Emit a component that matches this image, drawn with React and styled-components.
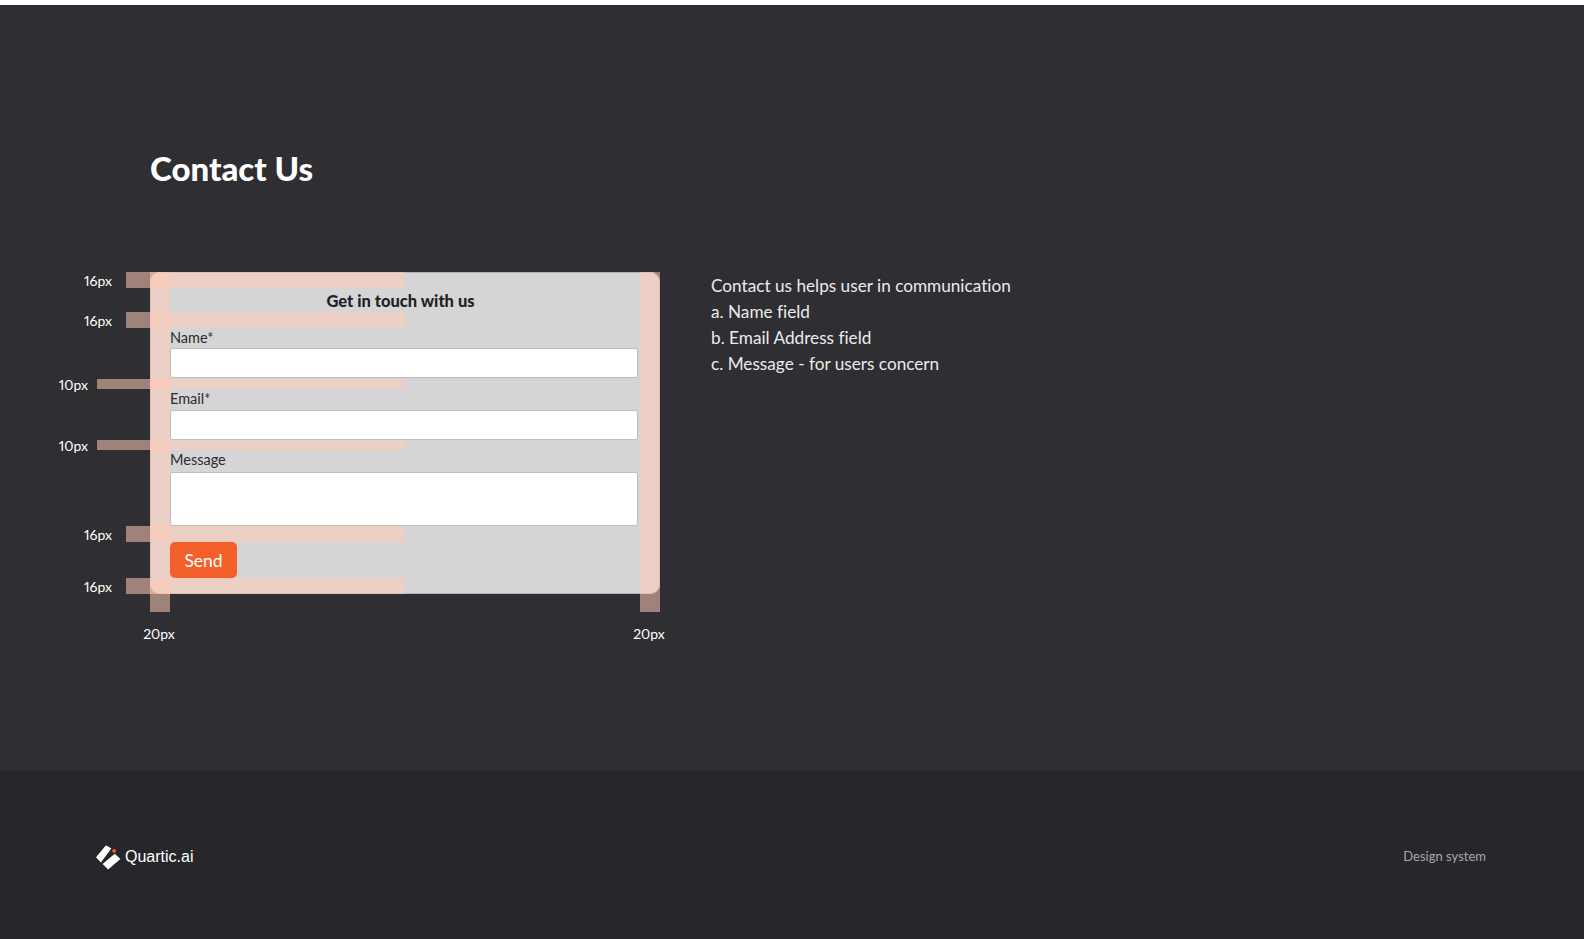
import React from 'react';
import styled, { createGlobalStyle } from 'styled-components';

const GlobalStyle = createGlobalStyle`
  body {
    margin: 0;
    background-color: #ffffff;
    font-family: 'Lato', 'Open Sans', sans-serif;
    font-variant-ligatures: none;
    font-variant-numeric: proportional-nums;
  }
`;

const Page = styled.div`
  padding-top: 5px;
  height: 934px;
  display: flex;
  flex-direction: column;
  overflow: hidden;
`;

const Main = styled.main`
  flex: 1;
  background-color: #2f2e33;
  padding: 143px 0 0 150px;
`;

const Title = styled.h1`
  margin: 0 0 84px;
  height: 40px;
  font-size: 33px;
  line-height: 40px;
  font-weight: 900;
  color: #ffffff;
`;

const Row = styled.div`
  display: flex;
  align-items: flex-start;
  column-gap: 51px;
`;

const CardWrap = styled.div`
  position: relative;
  width: 510px;
`;

const Card = styled.form`
  box-sizing: border-box;
  width: 510px;
  height: 322px;
  padding: 16px 22px 16px 20px;
  background-color: #d5d5d5;
  border-radius: 10px;
  box-shadow: inset 0 0 0 1px #b4b4b4;
  display: flex;
  flex-direction: column;
`;

const CardTitle = styled.h2`
  margin: 0 0 16px;
  padding-right: 7px;
  font-size: 16.5px;
  line-height: 26px;
  height: 24px;
  font-weight: 900;
  text-align: center;
  color: #222226;
`;

const Field = styled.div`
  display: flex;
  flex-direction: column;
  margin-bottom: ${props => props.$gap}px;
`;

const Label = styled.label`
  height: 20px;
  margin-bottom: ${props => props.$gap}px;
  font-size: 14.5px;
  line-height: 20px;
  color: #2b2b2f;
`;

const Input = styled.input`
  box-sizing: border-box;
  width: 100%;
  height: 30px;
  margin: 0;
  padding: 0 8px;
  background-color: #ffffff;
  border: 1px solid #bdbdbd;
  border-radius: 3px;
  outline: none;
`;

const TextArea = styled.textarea`
  box-sizing: border-box;
  display: block;
  width: 100%;
  height: 54px;
  margin: 0;
  padding: 8px;
  background-color: #ffffff;
  border: 1px solid #bdbdbd;
  border-radius: 3px;
  outline: none;
  resize: none;
`;

const SendButton = styled.button`
  width: 67px;
  height: 36px;
  padding: 0;
  background-color: #f4602a;
  border: none;
  border-radius: 5px;
  font-family: inherit;
  font-size: 17.5px;
  color: #ffffff;
`;

// measurement overlays drawn over the card
const RowGuide = styled.div`
  position: absolute;
  top: ${props => props.$top}px;
  left: ${props => (props.$size === 10 ? -53 : -24)}px;
  width: ${props => (props.$size === 10 ? 308 : 279)}px;
  height: ${props => props.$size}px;
  background-color: rgba(255, 203, 183, 0.54);
`;

const RowGuideLabel = styled.span`
  position: absolute;
  right: calc(100% + ${props => (props.$size === 10 ? 9 : 14)}px);
  top: 50%;
  transform: translateY(-50%);
  margin-top: 1px;
  font-size: 14px;
  line-height: 16px;
  color: #ffffff;
  white-space: nowrap;
`;

const ColumnGuide = styled.div`
  position: absolute;
  top: 0;
  left: ${props => props.$left}px;
  width: 20px;
  height: 340px;
  background-color: rgba(255, 203, 183, 0.54);
`;

const ColumnGuideLabel = styled.span`
  position: absolute;
  top: calc(100% + 14px);
  left: 50%;
  transform: translateX(-50%);
  margin-left: -1px;
  font-size: 14px;
  line-height: 16px;
  color: #ffffff;
  white-space: nowrap;
`;

const Notes = styled.div`
  padding-top: 1px;
  font-size: 17.2px;
  line-height: 26px;
  color: #ebebeb;
`;

const Footer = styled.footer`
  box-sizing: border-box;
  height: 169px;
  padding: 5px 98px 0 96px;
  background-color: #27262b;
  display: flex;
  align-items: center;
  justify-content: space-between;
`;

const Brand = styled.div`
  display: flex;
  align-items: center;
  column-gap: 4px;
`;

const BrandName = styled.span`
  font-family: 'Liberation Sans', Arial, sans-serif;
  font-size: 16px;
  line-height: 26px;
  color: #ffffff;
`;

const FooterText = styled.span`
  margin-top: -3px;
  font-size: 13px;
  color: #a8a7ab;
`;

const rowGuides = [
  { top: 0, size: 16 },
  { top: 40, size: 16 },
  { top: 107, size: 10 },
  { top: 168, size: 10 },
  { top: 254, size: 16 },
  { top: 306, size: 16 },
];

function App() {
  return (
    <Page>
      <GlobalStyle />
      <Main>
        <Title>Contact Us</Title>
        <Row>
          <CardWrap>
            <Card>
              <CardTitle>Get in touch with us</CardTitle>
              <Field $gap={11}>
                <Label $gap={0}>Name*</Label>
                <Input type="text" />
              </Field>
              <Field $gap={10}>
                <Label $gap={1}>Email*</Label>
                <Input type="email" />
              </Field>
              <Field $gap={16}>
                <Label $gap={2}>Message</Label>
                <TextArea />
              </Field>
              <div>
                <SendButton type="button">Send</SendButton>
              </div>
            </Card>
            {rowGuides.map(guide => (
              <RowGuide key={guide.top} $top={guide.top} $size={guide.size}>
                <RowGuideLabel $size={guide.size}>{guide.size}px</RowGuideLabel>
              </RowGuide>
            ))}
            <ColumnGuide $left={0}>
              <ColumnGuideLabel>20px</ColumnGuideLabel>
            </ColumnGuide>
            <ColumnGuide $left={490}>
              <ColumnGuideLabel>20px</ColumnGuideLabel>
            </ColumnGuide>
          </CardWrap>
          <Notes>
            <div>Contact us helps user in communication</div>
            <div>a. Name field</div>
            <div>b. Email Address field</div>
            <div>c. Message - for users concern</div>
          </Notes>
        </Row>
      </Main>
      <Footer>
        <Brand>
          <svg width="25" height="25" viewBox="0 0 24 24">
            <path d="M0 11.7 9.2 0.8a1 1 0 0 1 1.3-.2l4.2 2.7-10 13.4z" fill="#ffffff" />
            <path d="M6.3 18.3 18 8.3l5.4 5.2-11.7 10z" fill="#ffffff" />
            <circle cx="17.4" cy="5.6" r="1.8" fill="#f5602b" />
          </svg>
          <BrandName>Quartic.ai</BrandName>
        </Brand>
        <FooterText>Design system</FooterText>
      </Footer>
    </Page>
  );
}

export default App;
